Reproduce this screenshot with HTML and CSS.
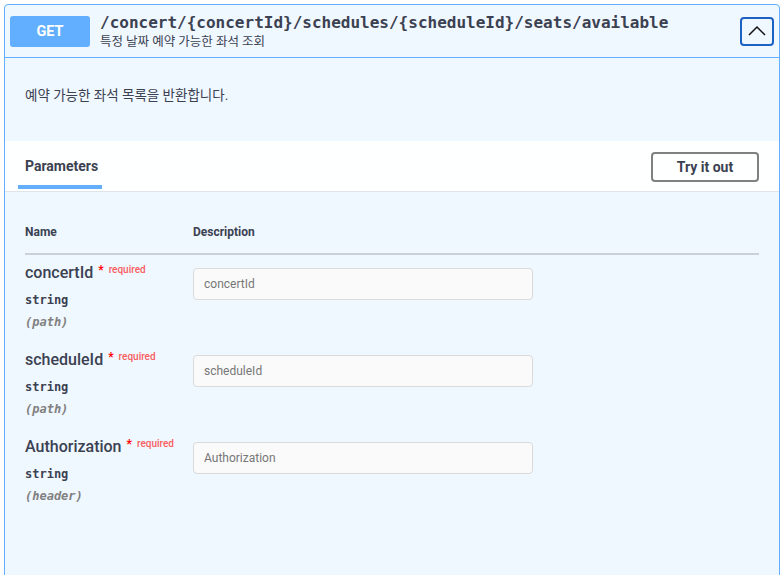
FILE: index.html
```html
<!DOCTYPE html>
<html lang="ko">
<head>
<meta charset="utf-8">
<link rel="stylesheet" href="styles.css">
</head>
<body>
<div class="opblock">
  <div class="summary">
    <span class="method">GET</span>
    <div class="path-wrap">
      <div class="path">/concert/{concertId}/schedules/{scheduleId}/seats/available</div>
      <div class="summary-desc">특정 날짜 예약 가능한 좌석 조회</div>
    </div>
    <button class="arrow" aria-label="collapse">
      <svg width="22" height="20" viewBox="0 0 22 20"><path d="M3 14 L11 6 L19 14" fill="none" stroke="#111" stroke-width="1.5"/></svg>
    </button>
  </div>
  <div class="description">예약 가능한 좌석 목록을 반환합니다.</div>
  <div class="section-header">
    <div class="tab"><span class="tab-label">Parameters</span></div>
    <button class="try">Try it out</button>
  </div>
  <div class="params">
    <div class="thead">
      <div class="col-name">Name</div>
      <div class="col-desc">Description</div>
    </div>
    <div class="row">
      <div class="col-name">
        <div class="pname">concertId<span class="star">*</span><span class="req">required</span></div>
        <div class="ptype">string</div>
        <div class="pin">(path)</div>
      </div>
      <div class="col-desc"><div class="input">concertId</div></div>
    </div>
    <div class="row">
      <div class="col-name">
        <div class="pname">scheduleId<span class="star">*</span><span class="req">required</span></div>
        <div class="ptype">string</div>
        <div class="pin">(path)</div>
      </div>
      <div class="col-desc"><div class="input">scheduleId</div></div>
    </div>
    <div class="row">
      <div class="col-name">
        <div class="pname">Authorization<span class="star">*</span><span class="req">required</span></div>
        <div class="ptype">string</div>
        <div class="pin">(header)</div>
      </div>
      <div class="col-desc"><div class="input">Authorization</div></div>
    </div>
  </div>
</div>
</body>
</html>
```

FILE: styles.css
```css
html, body {
  margin: 0;
  padding: 0;
  background: #ffffff;
  font-family: Roboto, "Noto Sans CJK KR", sans-serif;
  color: #3b4151;
  overflow: hidden;
}
.opblock {
  margin: 4px 1px 0 4px;
  border: 1px solid #61affe;
  border-radius: 4px;
  background: #eff7ff;
  height: 620px;
  box-sizing: border-box;
}
.summary {
  display: flex;
  align-items: center;
  height: 53px;
  padding: 0 5px;
  border-bottom: 1px solid #61affe;
  box-sizing: border-box;
}
.method {
  width: 80px;
  height: 31px;
  display: flex;
  align-items: center;
  justify-content: center;
  background: #61affe;
  color: #fff;
  font-weight: 700;
  font-size: 14.5px;
  border-radius: 3px;
}
.path-wrap {
  flex: 1;
  padding-left: 10px;
  margin-top: 2px;
}
.path {
  font-family: "DejaVu Sans Mono", monospace;
  font-weight: 700;
  font-size: 16px;
  line-height: 20px;
  color: #3b4151;
}
.summary-desc {
  font-size: 12.5px;
  line-height: 18px;
  color: #3b4151;
}
.arrow {
  width: 34px;
  height: 29px;
  border: 2px solid #1c62c4;
  border-radius: 4px;
  background: transparent;
  display: flex;
  align-items: center;
  justify-content: center;
  padding: 0;
  margin-top: 0;
}
.description {
  height: 83px;
  padding: 27px 20px 0;
  font-size: 13.5px;
  line-height: 20px;
  color: #3b4151;
  box-sizing: border-box;
}
.section-header {
  height: 51px;
  background: rgba(255,255,255,0.9);
  border-bottom: 1px solid #dfe4ea;
  display: flex;
  align-items: center;
  justify-content: space-between;
  padding: 0 20px;
  box-sizing: border-box;
}
.tab {
  position: relative;
  height: 100%;
  display: flex;
  align-items: center;
}
.tab-label {
  font-size: 14px;
  font-weight: 700;
  position: relative;
  margin-top: -1px;
}
.tab-label::after {
  content: "";
  position: absolute;
  left: -7px;
  right: -4px;
  bottom: -15px;
  height: 4px;
  background: #61affe;
}
.try {
  width: 108px;
  height: 30px;
  border: 2px solid #808080;
  border-radius: 4px;
  background: transparent;
  font-family: Roboto, sans-serif;
  font-size: 14px;
  font-weight: 700;
  color: #3b4151;
  padding: 0;
  margin-top: 1px;
}
.params {
  padding: 0 20px;
}
.thead {
  display: flex;
  height: 63px;
  align-items: flex-end;
  padding-bottom: 14px;
  border-bottom: 2px solid #cbd1da;
  box-sizing: border-box;
  font-size: 12px;
  font-weight: 700;
}
.col-name {
  width: 168px;
  flex-shrink: 0;
}
.col-desc {
  flex: 1;
}
.row {
  display: flex;
  height: 87px;
  padding-top: 8px;
  box-sizing: border-box;
}
.pname {
  font-size: 16px;
  font-weight: 500;
  line-height: 20px;
}
.star {
  color: #ff0000;
  font-size: 12px;
  font-weight: 700;
  margin-left: 5px;
  position: relative;
  top: -4px;
}
.req {
  color: #f85f5f;
  font-size: 10px;
  margin-left: 5px;
  position: relative;
  top: -5px;
}
.ptype {
  font-family: "DejaVu Sans Mono", monospace;
  font-weight: 700;
  font-size: 12px;
  margin-top: 7px;
  line-height: 16px;
}
.pin {
  font-family: "DejaVu Sans Mono", monospace;
  font-weight: 700;
  font-style: italic;
  font-size: 12px;
  color: #808080;
  margin-top: 6px;
  line-height: 16px;
}
.input {
  width: 340px;
  height: 32px;
  box-sizing: border-box;
  margin-top: 5px;
  background: #fafafa;
  border: 1px solid #dadada;
  border-radius: 4px;
  padding: 0 10px;
  display: flex;
  align-items: center;
  font-size: 12px;
  color: #777;
}
```
